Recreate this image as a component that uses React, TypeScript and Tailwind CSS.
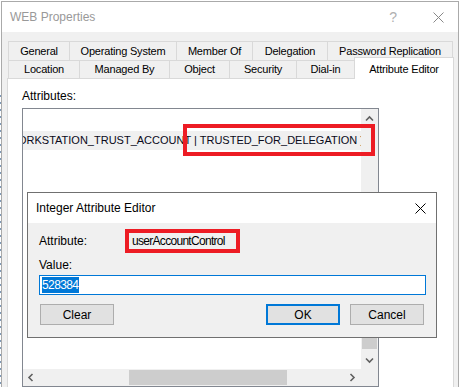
import React from "react";

const Chevron = ({ dir }: { dir: "up" | "down" | "left" | "right" }) => {
  const paths: Record<string, string> = {
    up: "M1 5.5 L4.5 2 L8 5.5",
    down: "M1 2.5 L4.5 6 L8 2.5",
    left: "M5.5 1 L2 4.5 L5.5 8",
    right: "M2.5 1 L6 4.5 L2.5 8",
  };
  return (
    <svg width="9" height="9" viewBox="0 0 9 9">
      <path d={paths[dir]} fill="none" stroke="#606060" strokeWidth="1.6" />
    </svg>
  );
};

const CloseX = ({ color }: { color: string }) => (
  <svg width="11" height="11" viewBox="0 0 11 11">
    <path d="M0.5 0.5 L10.5 10.5 M10.5 0.5 L0.5 10.5" stroke={color} strokeWidth="1" fill="none" />
  </svg>
);

const Tab = ({ w, label, first }: { w: string; label: string; first?: boolean }) => (
  <div
    className={`${w} ${first ? "" : "-ml-px"} h-full border border-[#d9d9d9] flex items-center justify-center text-[11px] tracking-[-0.2px] text-black`}
  >
    {label}
  </div>
);

const Tab2 = ({ w, label, first }: { w: string; label: string; first?: boolean }) => (
  <div
    className={`${w} ${first ? "" : "-ml-px"} h-[18px] border-l border-t border-r border-[#d9d9d9] flex items-center justify-center text-[11px] tracking-[-0.2px] text-black`}
  >
    {label}
  </div>
);

export default function App() {
  return (
    <div className="relative w-[461px] h-[387px] overflow-hidden bg-white flex [font-family:'Liberation_Sans',Arial,sans-serif]">
      {/* background window sliver */}
      <div className="w-px h-full flex flex-col">
        <div className="h-[90px] bg-white" />
        <div className="flex-1 bg-[repeating-linear-gradient(to_bottom,#ffffff_0px,#ffffff_5px,#7f9ab8_5px,#7f9ab8_7px)]" />
      </div>

      {/* Properties window */}
      <div className="mt-px w-[458px] h-[386px] border-l border-t border-r border-[#aaaaaa] bg-[#f0f0f0] flex flex-col">
        {/* title bar */}
        <div className="h-[30px] bg-white flex items-center pl-[8px] pr-[14px] shrink-0">
          <span className="text-[12px] text-[#999999]">WEB Properties</span>
          <span className="ml-auto text-[14px] text-[#b0b0b0] leading-none">?</span>
          <span className="ml-[36px] flex items-center">
            <CloseX color="#888888" />
          </span>
        </div>

        {/* body */}
        <div className="flex-1 flex flex-col pt-[9px]">
          <div className="ml-[6px] flex h-[20px]">
            <Tab first w="w-[62px]" label="General" />
            <Tab w="w-[108px]" label="Operating System" />
            <Tab w="w-[77px]" label="Member Of" />
            <Tab w="w-[76px]" label="Delegation" />
            <Tab w="w-[126px]" label="Password Replication" />
          </div>
          <div className="ml-[6px] -mt-px flex items-end h-[18px]">
            <Tab2 first w="w-[72px]" label="Location" />
            <Tab2 w="w-[91px]" label="Managed By" />
            <Tab2 w="w-[61px]" label="Object" />
            <Tab2 w="w-[68px]" label="Security" />
            <Tab2 w="w-[59px]" label="Dial-in" />
            <div className="-ml-px w-[100px] h-[22px] mb-[-1px] relative z-10 bg-white border-l border-t border-r border-[#d9d9d9] flex items-start justify-center pt-[3px] text-[11px] tracking-[-0.2px] text-black">
              Attribute Editor
            </div>
          </div>

          {/* panel */}
          <div className="ml-[5px] w-[447px] flex-1 bg-white border-l border-t border-r border-[#d9d9d9] pl-[14px] pt-[10px]">
            <div className="text-[12px] leading-[15px] text-black">Attributes:</div>
            <div className="mt-[4px] w-[357px] h-[279px] border border-[#828790] grid grid-cols-[1fr_17px] grid-rows-[1fr_17px]">
              {/* list content */}
              <div className="overflow-hidden bg-white pt-[22px]">
                <div className="h-[19px] bg-[#f0f0f0] whitespace-nowrap text-[11px] leading-[19px] text-[#0a0a1a]">
                  <span className="-ml-[5px] inline-block">
                    ORKSTATION_TRUST_ACCOUNT | TRUSTED_FOR_DELEGATION )
                  </span>
                </div>
              </div>
              {/* vertical scrollbar */}
              <div className="bg-[#f0f0f0] flex flex-col">
                <div className="h-[17px] flex items-center justify-center pt-[3px]">
                  <Chevron dir="up" />
                </div>
                <div className="flex-1 px-px">
                  <div className="mt-[175px] h-[48px] bg-[#cdcdcd]" />
                </div>
                <div className="h-[17px] flex items-center justify-center">
                  <Chevron dir="down" />
                </div>
              </div>
              {/* horizontal scrollbar */}
              <div className="bg-[#f0f0f0] flex items-center">
                <div className="w-[17px] h-full flex items-center justify-center">
                  <Chevron dir="left" />
                </div>
                <div className="ml-[89px] w-[158px] h-[15px] bg-[#cdcdcd]" />
                <div className="ml-auto w-[17px] h-full flex items-center justify-center">
                  <Chevron dir="right" />
                </div>
              </div>
              <div className="bg-[#f0f0f0]" />
            </div>
          </div>
        </div>
      </div>

      {/* red highlight over list row */}
      <div className="absolute left-[183px] top-[124px] w-[192px] h-[32px] border-4 border-[#ed1c24]" />

      {/* Integer Attribute Editor dialog */}
      <div className="absolute left-[27px] top-[192px] w-[410px] h-[146px] border border-[#707070] bg-[#f0f0f0] flex flex-col z-20">
        <div className="h-[30px] bg-white flex items-center pl-[8px] pr-[10px] shrink-0">
          <span className="text-[12px] text-black">Integer Attribute Editor</span>
          <span className="ml-auto flex items-center">
            <CloseX color="#000000" />
          </span>
        </div>
        <div className="px-[11px] pt-[6px] flex flex-col">
          <div className="flex items-center h-[24px]">
            <span className="w-[86px] text-[12px] text-black">Attribute:</span>
            <div className="w-[115px] h-[24px] border-4 border-[#ed1c24] pl-[3px] flex items-center text-[12px] tracking-[-0.7px] text-black whitespace-nowrap">
              userAccountControl
            </div>
          </div>
          <div className="mt-[5px] text-[12px] leading-[15px] text-black">Value:</div>
          <div className="mt-[2px] w-[387px] h-[20px] border border-[#0078d7] bg-white flex items-center pl-[2px]">
            <span className="h-[16px] leading-[16px] bg-[#0078d7] text-white text-[12px] tracking-[-0.6px] pr-px">
              528384
            </span>
          </div>
          <div className="mt-[9px] flex">
            <div className="ml-px w-[74px] h-[21px] border border-[#adadad] bg-[#e1e1e1] flex items-center justify-center text-[12px] text-black">
              Clear
            </div>
            <div className="ml-auto w-[74px] h-[21px] border-2 border-[#0078d7] bg-[#e1e1e1] flex items-center justify-center text-[12px] text-black">
              OK
            </div>
            <div className="ml-[10px] mr-px w-[74px] h-[21px] border border-[#adadad] bg-[#e1e1e1] flex items-center justify-center text-[12px] text-black">
              Cancel
            </div>
          </div>
        </div>
      </div>
    </div>
  );
}
